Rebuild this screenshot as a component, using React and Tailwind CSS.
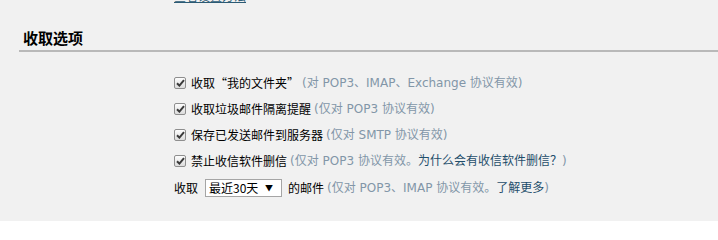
import React from "react";

const cjk = { fontFamily: '"Noto Sans CJK SC", "Noto Sans", sans-serif' };
const mixed = { fontFamily: '"DejaVu Sans", "Noto Sans CJK SC", sans-serif' };

function Check() {
  return (
    <span className="inline-flex h-[12px] w-[12px] shrink-0 items-center justify-center rounded-[2px] border border-[#8e8e8e] bg-gradient-to-b from-[#fdfdfd] to-[#dcdcdc]">
      <svg width="9" height="8" viewBox="0 0 9 8">
        <path d="M1 4.2 L3.4 6.6 L8 1.2" fill="none" stroke="#3a3a3a" strokeWidth="2" />
      </svg>
    </span>
  );
}

function Row({ label, children }) {
  return (
    <div className="flex h-[26px] items-center">
      <Check />
      <span className="ml-[5px] text-[12px] text-black" style={cjk}>{label}</span>
      <span className="ml-[3px] text-[12px] text-[#8296a8]" style={mixed}>{children}</span>
    </div>
  );
}

export default function App() {
  return (
    <div className="h-[221px] w-[718px] overflow-hidden bg-[#f1f1f1]">
      <div className="mt-[-12px] h-[16px] pl-[174px] text-[12px] leading-[16px] text-[#2b5a74] underline" style={cjk}>
        查看设置方法
      </div>
      <div className="mt-[22px] flex h-[24px] items-center pl-[23px] text-[15px] font-bold text-black" style={cjk}>
        收取选项
      </div>
      <div className="ml-[19px] h-[2px] bg-[#b9b9b9]" />
      <div className="pl-[174px] pt-[18px]">
        <Row label="收取“我的文件夹”">(对 POP3、IMAP、Exchange 协议有效)</Row>
        <Row label="收取垃圾邮件隔离提醒">(仅对 POP3 协议有效)</Row>
        <Row label="保存已发送邮件到服务器">(仅对 SMTP 协议有效)</Row>
        <Row label="禁止收信软件删信">
          (仅对 POP3 协议有效。<span className="text-[#1f4e6b]">为什么会有收信软件删信？</span>)
        </Row>
        <div className="flex h-[28px] items-center">
          <span className="text-[12px] text-black" style={cjk}>收取</span>
          <div className="ml-[7px] flex h-[18px] w-[77px] items-center justify-between border border-[#a5a5a5] bg-white pl-[3px] pr-[8px] text-[12px] text-black" style={cjk}>
            <span>最近30天</span>
            <span className="text-[8px]">▼</span>
          </div>
          <span className="ml-[6px] text-[12px] text-black" style={cjk}>的邮件</span>
          <span className="ml-[3px] text-[12px] text-[#8296a8]" style={mixed}>
            (仅对 POP3、IMAP 协议有效。<span className="text-[#1f4e6b]">了解更多</span>)
          </span>
        </div>
      </div>
    </div>
  );
}
